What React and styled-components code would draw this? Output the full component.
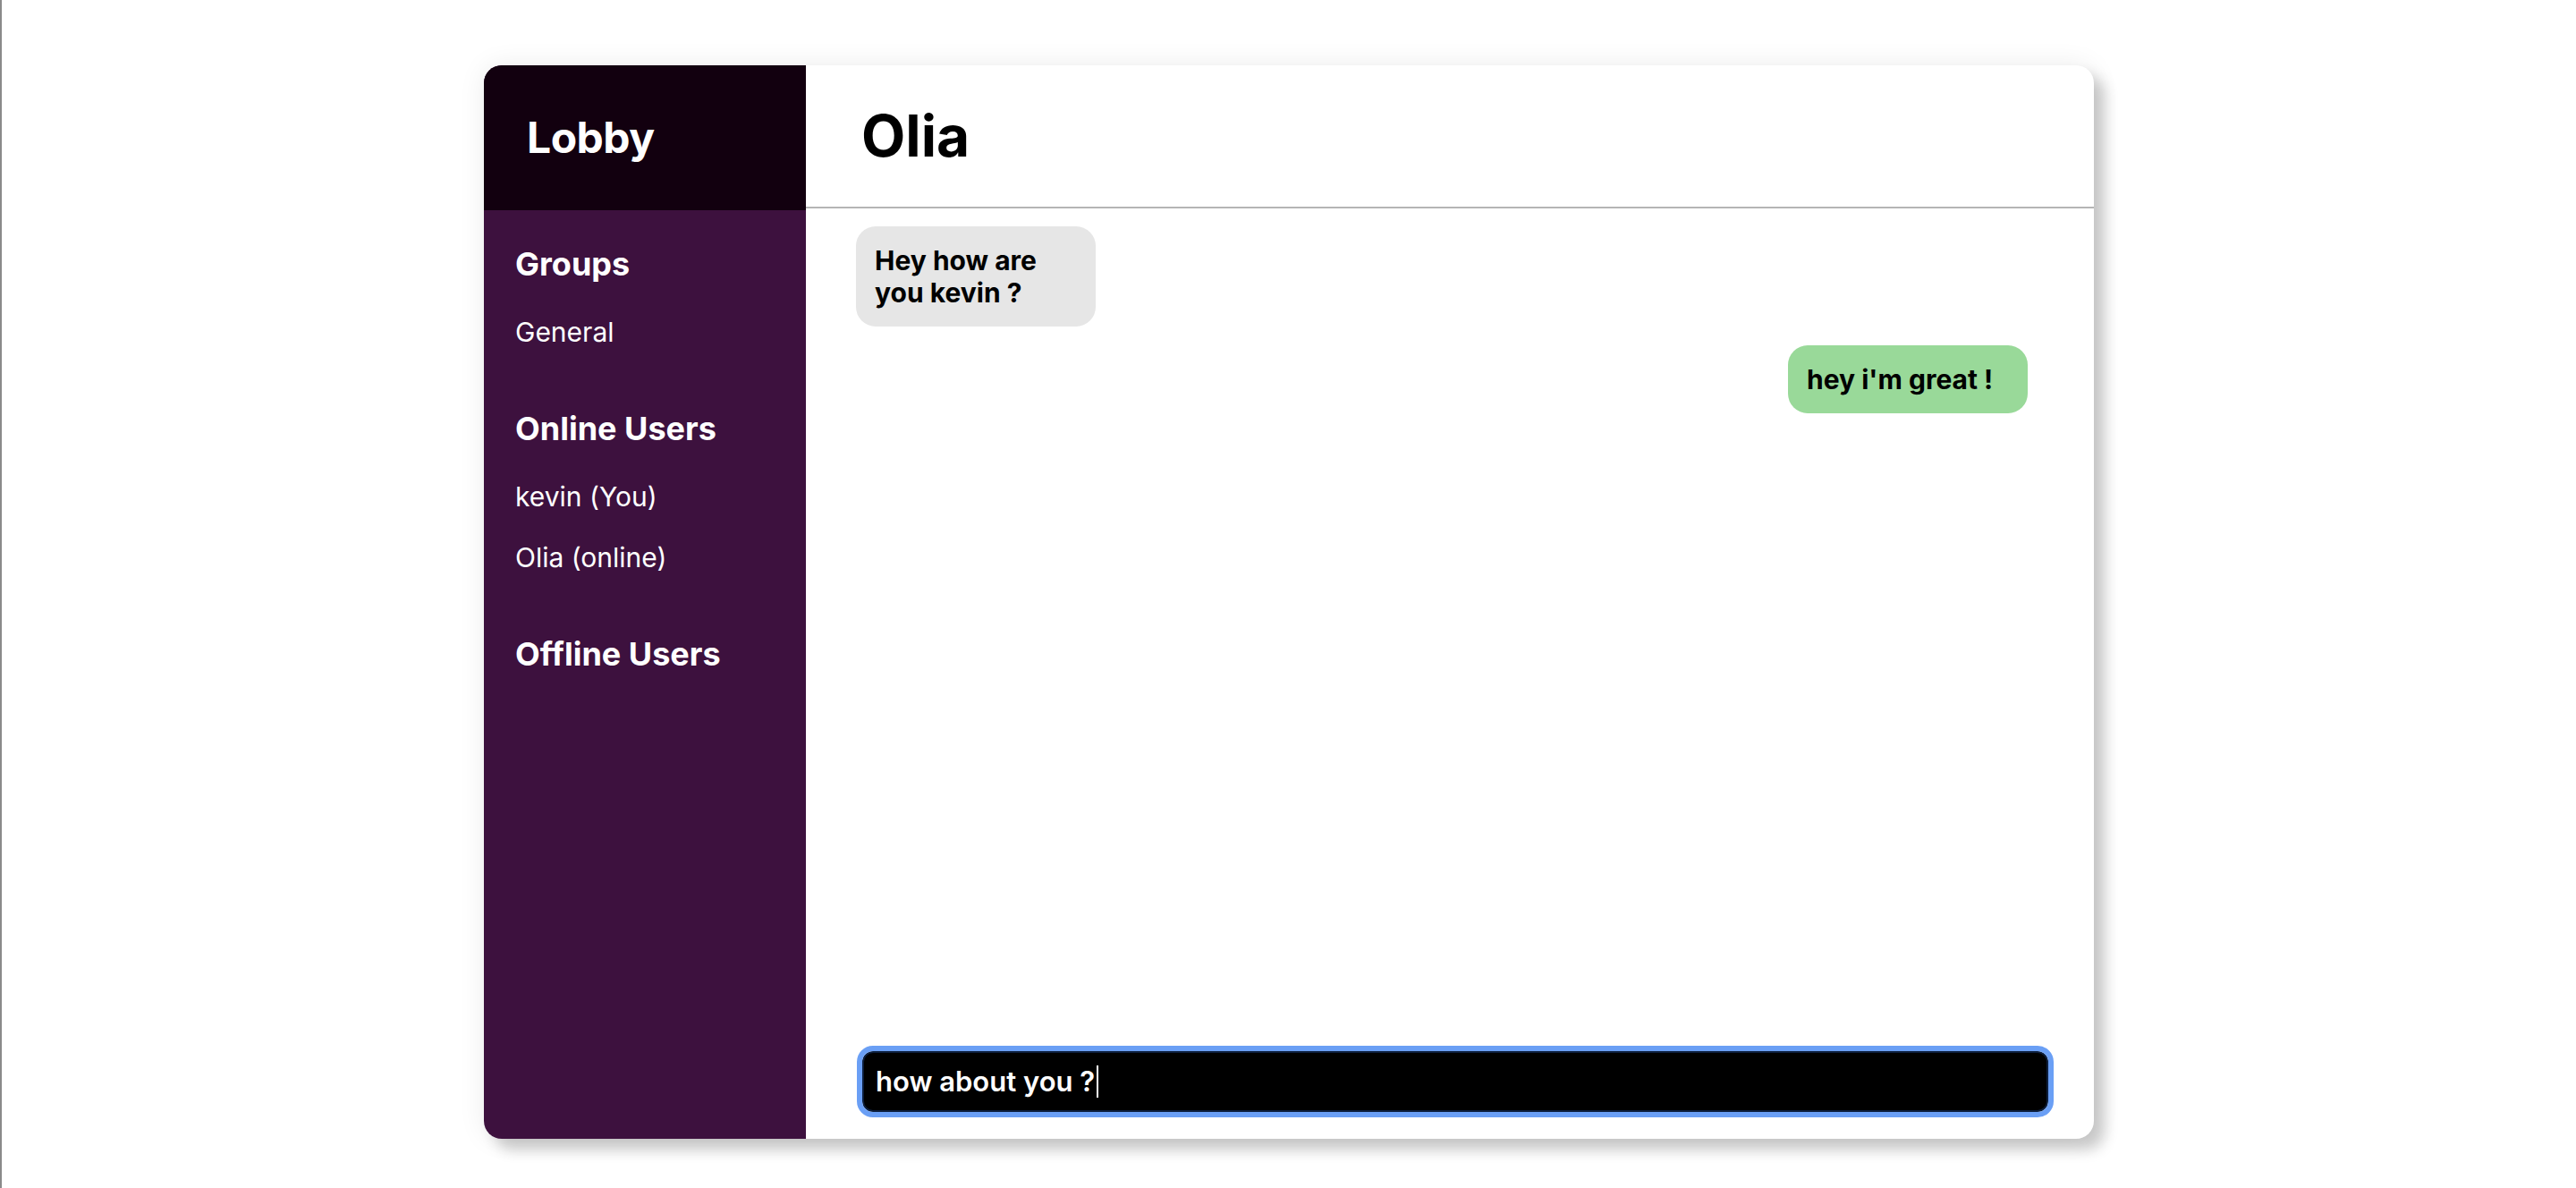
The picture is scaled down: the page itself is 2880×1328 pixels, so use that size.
import React from 'react';
import styled, { createGlobalStyle } from 'styled-components';

const groups = ['General'];
const onlineUsers = ['kevin (You)', 'Olia (online)'];
const offlineUsers = [];

const messages = [
  { id: 1, text: 'Hey how are you kevin ?', mine: false },
  { id: 2, text: "hey i'm great !", mine: true },
];

const App = () => {
  return (
    <>
      <GlobalStyle />
      <Card>
        <Sidebar>
          <SidebarHeader>Lobby</SidebarHeader>
          <SidebarBody>
            <Section>
              <SectionTitle>Groups</SectionTitle>
              <ItemList>
                {groups.map((g) => (
                  <Item key={g}>{g}</Item>
                ))}
              </ItemList>
            </Section>
            <Section>
              <SectionTitle>Online Users</SectionTitle>
              <ItemList>
                {onlineUsers.map((u) => (
                  <Item key={u}>{u}</Item>
                ))}
              </ItemList>
            </Section>
            <Section>
              <SectionTitle>Offline Users</SectionTitle>
              {offlineUsers.length > 0 && (
                <ItemList>
                  {offlineUsers.map((u) => (
                    <Item key={u}>{u}</Item>
                  ))}
                </ItemList>
              )}
            </Section>
          </SidebarBody>
        </Sidebar>

        <Main>
          <ChatHeader>Olia</ChatHeader>
          <Messages>
            {messages.map((m) => (
              <Bubble key={m.id} $mine={m.mine}>
                {m.text}
              </Bubble>
            ))}
          </Messages>
          <Composer>
            how about you ?<Caret />
          </Composer>
        </Main>
      </Card>
    </>
  );
};

// Styled Components
const GlobalStyle = createGlobalStyle`
  html, body {
    margin: 0;
    background: #fff;
  }

  body {
    border-left: 2px solid #8a8a8a;
    min-height: 1328px;
    box-sizing: border-box;
    font-family: Inter, "Noto Sans", sans-serif;
  }
`;

const Card = styled.div`
  display: grid;
  grid-template-columns: 360px 1fr;
  width: 1800px;
  height: 1200px;
  margin: 73px auto 0;
  border-radius: 20px;
  overflow: hidden;
  background: #fff;
  box-shadow: 12px 12px 16px rgba(0, 0, 0, 0.2), 0 0 30px rgba(0, 0, 0, 0.08);
`;

const Sidebar = styled.aside`
  display: flex;
  flex-direction: column;
  background: #3d113e;
  color: #fff;
`;

const SidebarHeader = styled.div`
  display: flex;
  align-items: center;
  height: 162px;
  padding-left: 48px;
  background: #12000f;
  font-size: 48px;
  font-weight: 700;
  line-height: 58px;
  letter-spacing: -0.5px;
`;

const SidebarBody = styled.div`
  display: flex;
  flex-direction: column;
  gap: 68px;
  padding: 38px 35px;
`;

const Section = styled.div`
  display: flex;
  flex-direction: column;
`;

const SectionTitle = styled.h3`
  margin: 0;
  font-size: 36px;
  font-weight: 700;
  line-height: 44px;
`;

const ItemList = styled.div`
  display: flex;
  flex-direction: column;
  gap: 32px;
  margin-top: 36px;
`;

const Item = styled.div`
  font-size: 30px;
  font-weight: 400;
  line-height: 36px;
`;

const Main = styled.section`
  display: flex;
  flex-direction: column;
  min-width: 0;
`;

const ChatHeader = styled.h1`
  display: flex;
  align-items: center;
  height: 158px;
  margin: 0;
  padding-left: 62px;
  border-bottom: 2px solid #b5b5b5;
  font-size: 64px;
  font-weight: 700;
  line-height: 78px;
  color: #000;
`;

const Messages = styled.div`
  flex: 1;
  display: flex;
  flex-direction: column;
  align-items: flex-start;
  gap: 21px;
  padding: 20px 74px 0 56px;
`;

const Bubble = styled.div`
  align-self: ${(p) => (p.$mine ? 'flex-end' : 'flex-start')};
  box-sizing: border-box;
  width: 268px;
  padding: 20px 21px;
  border-radius: 22px;
  background: ${(p) => (p.$mine ? '#99d999' : '#e6e6e6')};
  font-size: 30px;
  font-weight: 700;
  line-height: 36px;
  color: #000;
`;

const Composer = styled.div`
  display: flex;
  align-items: center;
  height: 68px;
  box-sizing: border-box;
  margin: 0 51px 30px 63px;
  padding-left: 13px;
  border: 2px solid #0d1f3d;
  border-radius: 12px;
  outline: 6px solid #6a9ff5;
  background: #000;
  color: #fff;
  font-size: 31px;
  font-weight: 600;
  line-height: 36px;
`;

const Caret = styled.span`
  display: inline-block;
  width: 2px;
  height: 36px;
  margin-left: 2px;
  background: #fff;
`;

export default App;
